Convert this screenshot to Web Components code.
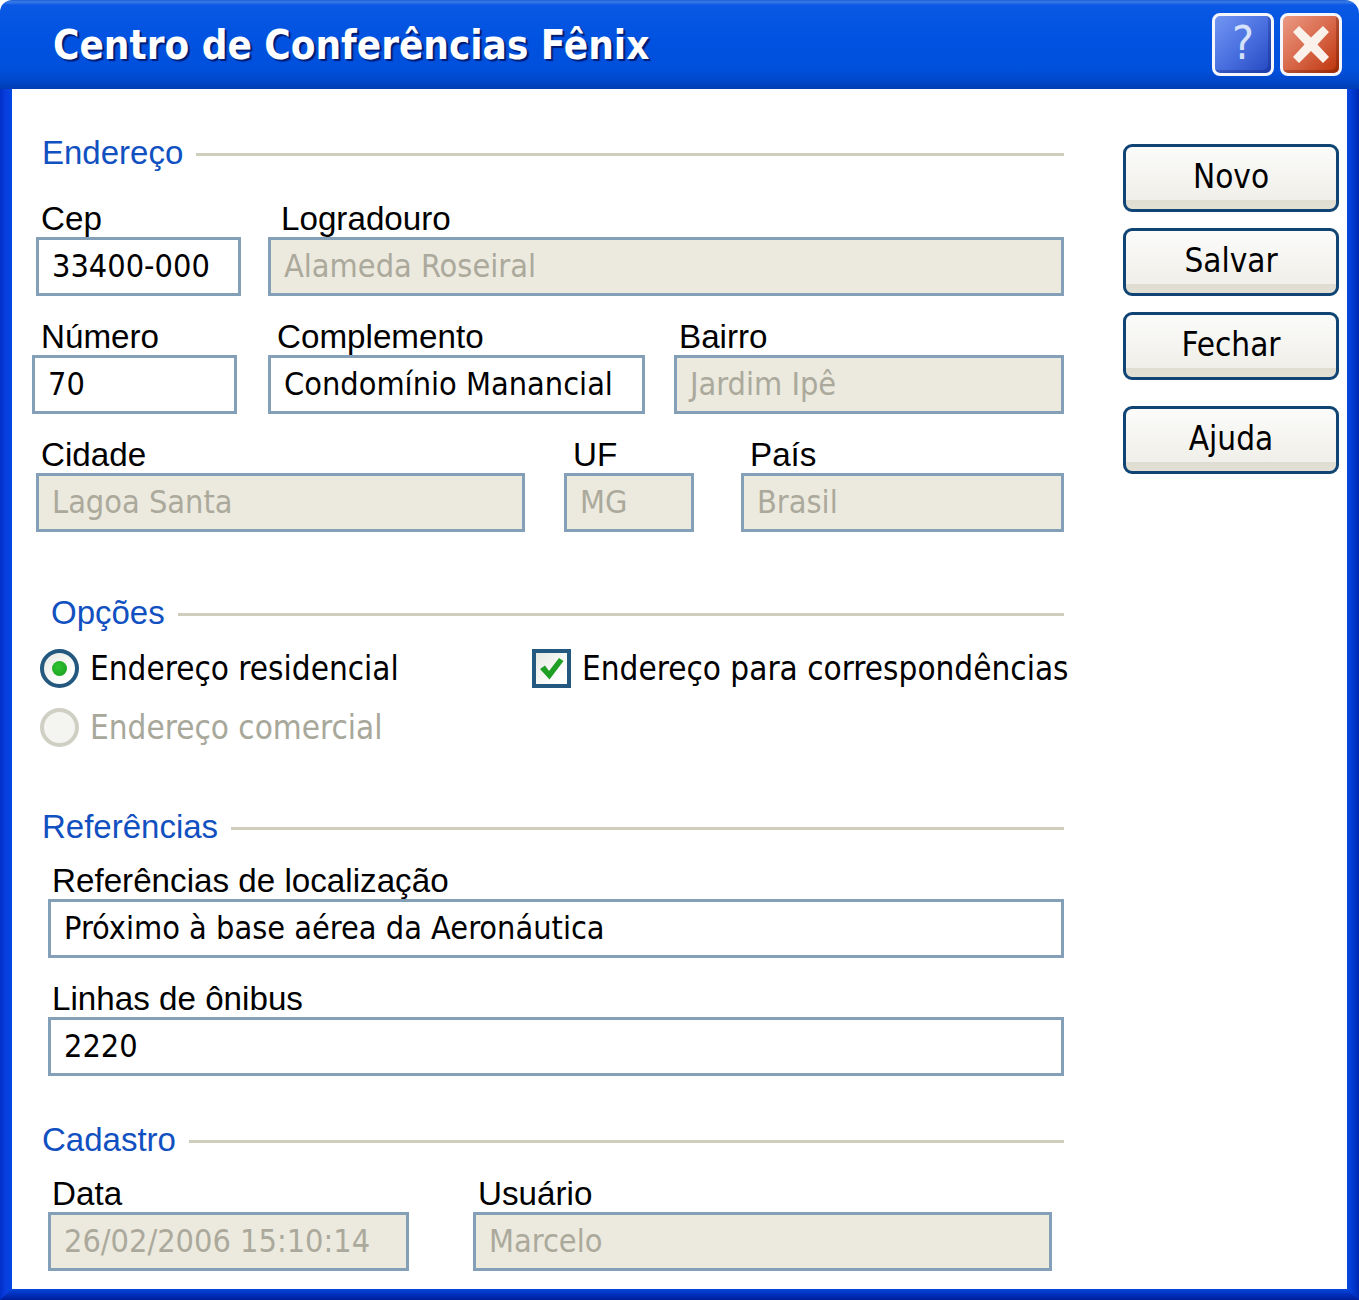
<!DOCTYPE html>
<html lang="pt">
<head>
<meta charset="utf-8">
<title>Centro de Conferências Fênix</title>
<style>
  html, body { margin: 0; padding: 0; background: #fff; }
  body { font-family: "DejaVu Sans", sans-serif; color: #000; }
  field-row + field-row { margin-top: 23px; }
  .opts-head { margin-top: 63px; }
  .refs-head { margin-top: 62px; }
  .cad-head { margin-top: 46px; }
  .first-row { margin-top: 30px; }
  .next-row { margin-top: 18px; }
  .side-gap { margin-top: 26px; }
</style>
</head>
<body>
<app-window>
  <span slot="heading">Centro de Conferências Fênix</span>
  <title-button slot="controls" kind="help">?</title-button>
  <title-button slot="controls" kind="close">
    <svg width="38" height="37" viewBox="0 0 38 37"><path fill="#f9f1ea" d="M1 6 7 0 19 11.500 31 0 37 6 25.500 18.500 37 31 31 37 19 25 7 37 1 31 12.500 18.500Z"/></svg>
  </title-button>

  <section-head>Endereço</section-head>
  <field-row class="first-row">
    <text-field label="Cep" style="--w:205px;--ml:24px;--lx:5px">33400-000</text-field>
    <text-field label="Logradouro" disabled style="--w:796px;--ml:27px;--lx:13px">Alameda Roseiral</text-field>
  </field-row>
  <field-row>
    <text-field label="Número" style="--w:205px;--ml:20px;--lx:9px">70</text-field>
    <text-field label="Complemento" style="--w:377px;--ml:31px;--lx:9px">Condomínio Manancial</text-field>
    <text-field label="Bairro" disabled style="--w:390px;--ml:29px;--lx:5px">Jardim Ipê</text-field>
  </field-row>
  <field-row>
    <text-field label="Cidade" disabled style="--w:489px;--ml:24px;--lx:5px">Lagoa Santa</text-field>
    <text-field label="UF" disabled style="--w:130px;--ml:39px;--lx:9px">MG</text-field>
    <text-field label="País" disabled style="--w:323px;--ml:47px;--lx:9px">Brasil</text-field>
  </field-row>

  <section-head class="opts-head" style="--hx:39px">Opções</section-head>
  <option-grid class="next-row">
    <option-item type="radio" checked>Endereço residencial</option-item>
    <option-item type="check" checked>Endereço para correspondências</option-item>
    <option-item type="radio" disabled>Endereço comercial</option-item>
  </option-grid>

  <section-head class="refs-head">Referências</section-head>
  <field-row class="next-row">
    <text-field label="Referências de localização" style="--w:1016px;--ml:36px;--lx:4px">Próximo à base aérea da Aeronáutica</text-field>
  </field-row>
  <field-row>
    <text-field label="Linhas de ônibus" style="--w:1016px;--ml:36px;--lx:4px">2220</text-field>
  </field-row>

  <section-head class="cad-head">Cadastro</section-head>
  <field-row class="next-row">
    <text-field label="Data" disabled style="--w:361px;--ml:36px;--lx:4px">26/02/2006 15:10:14</text-field>
    <text-field label="Usuário" disabled style="--w:579px;--ml:64px;--lx:5px">Marcelo</text-field>
  </field-row>

  <action-button slot="side">Novo</action-button>
  <action-button slot="side">Salvar</action-button>
  <action-button slot="side" style="margin-top:15px">Fechar</action-button>
  <action-button slot="side" class="side-gap">Ajuda</action-button>
</app-window>

<script>
class AppWindow extends HTMLElement {
  constructor() {
    super();
    this.attachShadow({mode: "open"}).innerHTML = `
    <style>
      :host {
        display: grid;
        width: 1359px;
        height: 1300px;
        grid-template-columns: 12px 1fr 12px;
        grid-template-rows: 89px 1fr 11px;
        background: #fff;
      }
      .bar {
        grid-column: 1 / -1;
        display: flex;
        align-items: center;
        padding: 0 17px 0 53px;
        border-radius: 12px 14px 0 0;
        background: linear-gradient(#1c62d8 0, #3a7ae6 2px, #0a58e4 5px, #0052e0 40px, #0050dc 70px, #0044c4 84px, #003cb0 89px);
      }
      .heading {
        flex: 1;
        color: #fff;
        font: 700 40px "DejaVu Sans", sans-serif;
        font-stretch: condensed;
        text-shadow: 2px 2px 1px #001a70;
        white-space: nowrap;
      }
      .controls { display: flex; gap: 6px; }
      .edge { grid-row: 2 / 4; }
      .left { grid-column: 1; background: linear-gradient(90deg, #0030c8, #0a3ee0 6px, #0048e0); }
      .right { grid-column: 3; background: linear-gradient(90deg, #0a48e0, #0038d0 6px, #0028b0); }
      .bottom {
        grid-column: 1 / -1;
        grid-row: 3;
        background: linear-gradient(#0848d8, #0030c0 5px, #001e96);
        clip-path: polygon(12px 0, calc(100% - 12px) 0, 100% 100%, 0 100%);
      }
      .body { grid-column: 2; grid-row: 2; display: flex; min-height: 0; }
      .form { width: 1052px; padding-top: 46px; }
      .side { margin-left: 59px; padding-top: 55px; width: 216px; }
    </style>
    <div class="bar">
      <div class="heading"><slot name="heading"></slot></div>
      <div class="controls"><slot name="controls"></slot></div>
    </div>
    <div class="edge left"></div>
    <div class="edge right"></div>
    <div class="bottom"></div>
    <div class="body">
      <div class="form"><slot></slot></div>
      <div class="side"><slot name="side"></slot></div>
    </div>`;
  }
}

class TitleButton extends HTMLElement {
  constructor() {
    super();
    this.attachShadow({mode: "open"}).innerHTML = `
    <style>
      :host {
        display: flex;
        width: 62px;
        height: 63px;
        box-sizing: border-box;
        align-items: center;
        justify-content: center;
        border: 3px solid #f4f6fc;
        border-radius: 8px;
        color: #d6e2fa;
        font: 400 46px "DejaVu Sans", sans-serif;
        font-stretch: condensed;
        line-height: 1;
        padding-bottom: 3px;
        box-shadow: inset -3px -3px 0 rgba(0, 20, 100, 0.25);
      }
      :host([kind="help"]) { background: linear-gradient(135deg, #7396f2, #4a70e0 50%, #2448c0); }
      :host([kind="close"]) { background: linear-gradient(135deg, #ea9a84, #d8684a 50%, #bc3208); padding: 0; box-shadow: inset -3px -3px 0 rgba(90, 20, 0, 0.3); }
    </style>
    <slot></slot>`;
  }
}

class SectionHead extends HTMLElement {
  constructor() {
    super();
    this.attachShadow({mode: "open"}).innerHTML = `
    <style>
      :host {
        display: flex;
        align-items: center;
        gap: 13px;
        height: 36px;
        padding-left: var(--hx, 30px);
        color: #1150c0;
        font: 400 33px "Liberation Sans", sans-serif;
      }
      .line { flex: 1; height: 3px; margin-top: 2px; background: #cfcdbc; }
    </style>
    <slot></slot>
    <div class="line"></div>`;
  }
}

class FieldRow extends HTMLElement {
  constructor() {
    super();
    this.attachShadow({mode: "open"}).innerHTML = `
    <style>:host { display: flex; }</style>
    <slot></slot>`;
  }
}

class TextField extends HTMLElement {
  constructor() {
    super();
    this.attachShadow({mode: "open"});
  }
  connectedCallback() {
    this.shadowRoot.innerHTML = `
    <style>
      :host {
        display: block;
        flex: none;
        margin-left: var(--ml);
        width: var(--w);
      }
      .label {
        padding-left: var(--lx);
        height: 36px;
        font: 400 33.2px/36px "Liberation Sans", sans-serif;
      }
      .box {
        box-sizing: border-box;
        height: 59px;
        padding-left: 13px;
        border: 3px solid #84a0b8;
        background: #fff;
        font: 400 32.2px/53px "DejaVu Sans", sans-serif;
        font-stretch: condensed;
        white-space: nowrap;
      }
      :host([disabled]) .box { background: #ece9de; color: #aba99c; }
    </style>
    <div class="label">${this.getAttribute("label")}</div>
    <div class="box"><slot></slot></div>`;
  }
}

class OptionGrid extends HTMLElement {
  constructor() {
    super();
    this.attachShadow({mode: "open"}).innerHTML = `
    <style>
      :host {
        display: grid;
        grid-template-columns: 492px 1fr;
        row-gap: 20px;
        padding-left: 28px;
      }
    </style>
    <slot></slot>`;
  }
}

class OptionItem extends HTMLElement {
  constructor() {
    super();
    this.attachShadow({mode: "open"});
  }
  connectedCallback() {
    const checked = this.hasAttribute("checked");
    const mark = this.getAttribute("type") === "radio"
      ? `<div class="mark radio">${checked ? '<div class="dot"></div>' : ""}</div>`
      : `<div class="mark check"><svg width="25" height="23" viewBox="0 0 25 23"><path fill="#1fa024" d="M1 12 6 8.500 10 14 20 1 24.500 4 10.500 22.500Z"/></svg></div>`;
    this.shadowRoot.innerHTML = `
    <style>
      :host {
        display: flex;
        align-items: center;
        gap: 11px;
        height: 39px;
        font: 400 33px "DejaVu Sans", sans-serif;
        font-stretch: condensed;
        white-space: nowrap;
      }
      .mark {
        box-sizing: border-box;
        flex: none;
        width: 39px;
        height: 39px;
        display: flex;
        align-items: center;
        justify-content: center;
        border: 4px solid #24587f;
        background: linear-gradient(135deg, #e8e8e2, #fff 80%);
      }
      .radio { border-radius: 50%; }
      .dot {
        width: 15px;
        height: 15px;
        border-radius: 50%;
        background: radial-gradient(circle at 40% 40%, #2ec42e, #189a20);
      }
      :host([disabled]) { color: #a8a89a; }
      :host([disabled]) .mark { border-color: #d0cfc4; background: #f4f4f1; }
    </style>
    ${mark}
    <span><slot></slot></span>`;
  }
}

class ActionButton extends HTMLElement {
  constructor() {
    super();
    this.attachShadow({mode: "open"}).innerHTML = `
    <style>
      :host {
        display: flex;
        box-sizing: border-box;
        width: 216px;
        height: 68px;
        margin-bottom: 16px;
        align-items: center;
        justify-content: center;
        border: 3px solid #0f4474;
        border-radius: 9px;
        padding-bottom: 4px;
        background: linear-gradient(#fbfbfa, #f0efe9 calc(100% - 9px), #dfdcd1 calc(100% - 9px), #e2dfd5);
        font: 400 33px "DejaVu Sans", sans-serif;
        font-stretch: condensed;
      }
    </style>
    <slot></slot>`;
  }
}

customElements.define("app-window", AppWindow);
customElements.define("title-button", TitleButton);
customElements.define("section-head", SectionHead);
customElements.define("field-row", FieldRow);
customElements.define("text-field", TextField);
customElements.define("option-grid", OptionGrid);
customElements.define("option-item", OptionItem);
customElements.define("action-button", ActionButton);
</script>
</body>
</html>
